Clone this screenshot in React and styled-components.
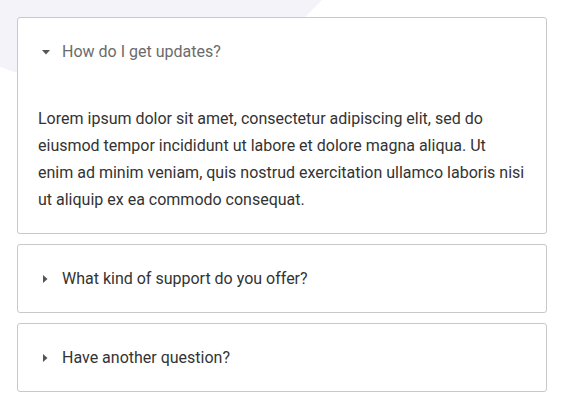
import React, { useState } from "react";
import styled, { createGlobalStyle } from "styled-components";

const GlobalStyle = createGlobalStyle`
  html, body {
    margin: 0;
    background: #ffffff;
  }
  body {
    font-family: Roboto, "Liberation Sans", sans-serif;
  }
`;

const Page = styled.div`
  position: relative;
  width: 565px;
  height: 411px;
  overflow: hidden;
  box-sizing: border-box;
  padding: 17px 18px 0 17px;
`;

// soft lavender blob sitting behind the cards
const Blob = styled.div`
  position: absolute;
  inset: 0;
  background: #f4f3fa;
  clip-path: polygon(0 0, 322px 0, 189px 133px, 0 67px);
  z-index: 0;
`;

const List = styled.div`
  position: relative;
  z-index: 1;
  display: flex;
  flex-direction: column;
  gap: 10px;
`;

const Item = styled.div`
  background: #ffffff;
  border: 1px solid #c9c9c9;
  border-radius: 3px;
`;

const Header = styled.div`
  display: flex;
  align-items: center;
  gap: 12px;
  box-sizing: border-box;
  height: 67px;
  padding-left: 24px;
  cursor: pointer;
  font-size: 16px;
  color: ${(p) => (p.$open ? "#6b6b6b" : "#333333")};
`;

const Caret = styled.svg`
  flex: none;
  width: 8px;
  height: 10px;
  fill: #555555;
`;

const Body = styled.div`
  padding: 20px 20px 20px 20px;
  font-size: 16px;
  line-height: 27px;
  color: #333333;
  white-space: pre-line;
`;

const items = [
  {
    q: "How do I get updates?",
    a: "Lorem ipsum dolor sit amet, consectetur adipiscing elit, sed do\neiusmod tempor incididunt ut labore et dolore magna aliqua. Ut\nenim ad minim veniam, quis nostrud exercitation ullamco laboris nisi\nut aliquip ex ea commodo consequat.",
  },
  {
    q: "What kind of support do you offer?",
    a: "We offer email and chat support during business hours.",
  },
  {
    q: "Have another question?",
    a: "Get in touch with us and we will get back to you shortly.",
  },
];

function Arrow({ open }) {
  return (
    <Caret viewBox="0 0 8 10">
      {open ? <polygon points="0,3 8,3 4,7.5" /> : <polygon points="1,1 5.5,5 1,9" />}
    </Caret>
  );
}

function App() {
  const [openIdx, setOpenIdx] = useState(0);

  return (
    <>
      <GlobalStyle />
      <Page>
        <Blob />
        <List>
          {items.map((it, i) => (
            <Item key={it.q}>
              <Header
                role="button"
                $open={openIdx === i}
                onClick={() => setOpenIdx(openIdx === i ? -1 : i)}
              >
                <Arrow open={openIdx === i} />
                {it.q}
              </Header>
              {openIdx === i && <Body>{it.a}</Body>}
            </Item>
          ))}
        </List>
      </Page>
    </>
  );
}

export default App;
